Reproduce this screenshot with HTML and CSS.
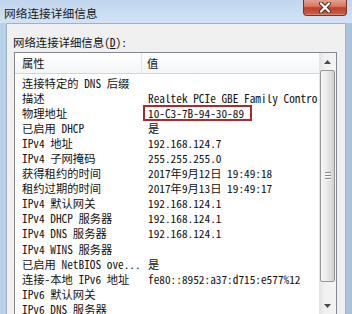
FILE: index.html
```html
<!DOCTYPE html>
<html><head>
<meta charset="utf-8"><title>网络连接详细信息</title>
<link rel="stylesheet" href="styles.css">
</head>
<body>
<div class="window">
<div class="titlebar">
<span class="title">网络连接详细信息</span>
<div class="close">
<svg width="12" height="11" viewBox="0 0 12 11">
<path d="M2 1.5 L10 9.5 M10 1.5 L2 9.5" stroke="#5a2418" stroke-width="4" stroke-linecap="round"/>
<path d="M2 1.5 L10 9.5 M10 1.5 L2 9.5" stroke="#ffffff" stroke-width="2.2" stroke-linecap="round"/>
</svg>
</div>
</div>
<div class="frame">
<div class="dialog">
<div class="label">网络连接详细信息(<u>D</u>):</div>
<div class="listbox">
<div class="list">
<div class="header">
<div class="hcol1">属性</div>
<div class="hcol2">值</div>
</div>
<div class="rows">
<div class="row"><div class="col1">连接特定的 DNS 后缀</div><div class="col2"></div></div>
<div class="row"><div class="col1">描述</div><div class="col2">Realtek PCIe GBE Family Controller</div></div>
<div class="row hl"><div class="col1">物理地址</div><div class="col2">10-C3-7B-94-30-89</div></div>
<div class="row"><div class="col1">已启用 DHCP</div><div class="col2">是</div></div>
<div class="row"><div class="col1">IPv4 地址</div><div class="col2">192.168.124.7</div></div>
<div class="row"><div class="col1">IPv4 子网掩码</div><div class="col2">255.255.255.0</div></div>
<div class="row"><div class="col1">获得租约的时间</div><div class="col2">2017年9月12日 19:49:18</div></div>
<div class="row"><div class="col1">租约过期的时间</div><div class="col2">2017年9月13日 19:49:17</div></div>
<div class="row"><div class="col1">IPv4 默认网关</div><div class="col2">192.168.124.1</div></div>
<div class="row"><div class="col1">IPv4 DHCP 服务器</div><div class="col2">192.168.124.1</div></div>
<div class="row"><div class="col1">IPv4 DNS 服务器</div><div class="col2">192.168.124.1</div></div>
<div class="row"><div class="col1">IPv4 WINS 服务器</div><div class="col2"></div></div>
<div class="row"><div class="col1">已启用 NetBIOS ove...</div><div class="col2">是</div></div>
<div class="row"><div class="col1">连接-本地 IPv6 地址</div><div class="col2">fe80::8952:a37:d715:e577%12</div></div>
<div class="row"><div class="col1">IPv6 默认网关</div><div class="col2"></div></div>
<div class="row"><div class="col1">IPv6 DNS 服务器</div><div class="col2"></div></div>
</div>
</div>
<div class="scrollbar">
<div class="sbtn">
<svg width="7" height="4" viewBox="0 0 7 4"><path d="M0 4 L3.5 0 L7 4 Z" fill="#4a4a4a"/></svg>
</div>
<div class="thumb">
<div class="grip"></div>
<div class="grip"></div>
<div class="grip"></div>
</div>
<div class="track"></div>
<div class="sbtn">
<svg width="7" height="4" viewBox="0 0 7 4"><path d="M0 0 L7 0 L3.5 4 Z" fill="#4a4a4a"/></svg>
</div>
</div>
</div>
</div>
</div>
</div>
</body></html>
```

FILE: styles.css
```css
body {
margin: 0;
overflow: hidden;
font-family: "Noto Sans CJK SC", sans-serif;
color: #111;
}
.window {
width: 352px;
height: 314px;
overflow: hidden;
display: flex;
flex-direction: column;
background: linear-gradient(90deg, #b9d0e9, #c9dcf1 45%, #c3d7ed 85%, #a9c1d8);
}
.titlebar {
height: 23px;
flex: none;
display: flex;
justify-content: space-between;
align-items: flex-start;
background: linear-gradient(#c0d6ee, #d2e3f5);
}
.title {
font-size: 11.7px;
line-height: 12px;
padding: 7px 0 0 4px;
color: #1a1a1a;
}
.close {
width: 44px;
height: 17px;
margin: -1px 5px 0 0;
box-sizing: border-box;
border: 1px solid #7a3325;
border-top: none;
border-radius: 0 0 4px 4px;
background: linear-gradient(#e6a595, #d47a62 45%, #c0402a 55%, #c9583f 90%, #e2947c);
display: flex;
justify-content: center;
align-items: center;
}
.frame {
flex: 1;
display: flex;
padding: 0 6px;
}
.dialog {
flex: 1;
background: #f0f0f0;
border: 1px solid #9db1c7;
border-bottom: none;
padding: 10px 8px 0 7px;
}
.label {
font-family: "Noto Sans Mono CJK SC", "Liberation Mono", "Noto Sans CJK SC", monospace;
font-size: 11.4px;
line-height: 16px;
margin: 0 0 2px -1px;
}
.listbox {
width: 323px;
height: 263px;
box-sizing: border-box;
border: 1px solid #828790;
background: #fff;
display: flex;
}
.list {
flex: 1;
min-width: 0;
overflow: hidden;
font-family: "Noto Sans Mono CJK SC", "Liberation Mono", "Noto Sans CJK SC", monospace;
font-size: 11.3px;
}
.header {
height: 21px;
box-sizing: border-box;
border-bottom: 1px solid #d5d5d5;
background: linear-gradient(#ffffff, #f4f5f7);
display: flex;
line-height: 20px;
}
.hcol1 {
width: 127px;
flex: none;
box-sizing: border-box;
padding-left: 7px;
border-right: 1px solid #e2e6eb;
}
.hcol2 {
padding-left: 5px;
}
.rows {
padding-top: 1.5px;
}
.row {
display: flex;
height: 15.1px;
line-height: 15.1px;
white-space: nowrap;
}
.col1 {
width: 133px;
flex: none;
box-sizing: border-box;
padding-left: 7px;
overflow: hidden;
}
.col2 {
flex: 1;
min-width: 0;
overflow: hidden;
}
.hl {
position: relative;
}
.hl::after {
content: "";
position: absolute;
left: 128px;
top: -1px;
width: 109px;
height: 16px;
box-sizing: border-box;
border: 2.5px solid #b3262b;
}
.scrollbar {
width: 17px;
flex: none;
display: flex;
flex-direction: column;
background: linear-gradient(90deg, #e3e3e3, #f0f0f0 30%, #f4f4f4);
}
.sbtn {
height: 17px;
flex: none;
display: flex;
justify-content: center;
align-items: center;
}
.thumb {
height: 212px;
flex: none;
margin: 0 1px 0 1px;
box-sizing: border-box;
border: 1px solid #979797;
border-radius: 2px;
background: linear-gradient(90deg, #f6f6f6, #ececec 40%, #dcdcdc 80%, #cfcfcf);
display: flex;
flex-direction: column;
justify-content: center;
align-items: center;
gap: 1px;
}
.grip {
width: 6px;
height: 1px;
background: #8a8a8a;
border-bottom: 1px solid #fafafa;
}
.track {
flex: 1;
}
```
